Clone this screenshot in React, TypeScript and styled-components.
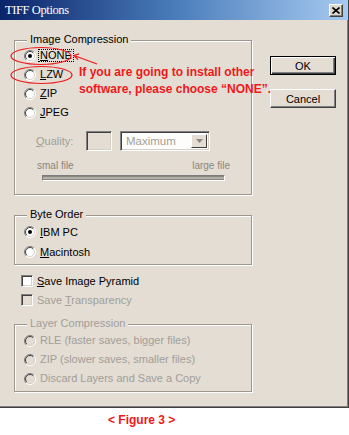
import React from "react";
import styled, { createGlobalStyle, css } from "styled-components";

const BG = "#e3ddd4";
const DIS = "#a29e98";
const RED = "#f0181a";

const GlobalStyle = createGlobalStyle`
  html, body { margin: 0; padding: 0; background: #fff; }
  body { font-family: "Liberation Sans", Arial, sans-serif; font-size: 11px; color: #000; }
  * { box-sizing: border-box; }
`;

const Page = styled.div`
  width: 349px;
  height: 435px;
  display: flex;
  flex-direction: column;
  background: #fff;
  overflow: hidden;
`;

const Window = styled.div`
  position: relative;
  width: 349px;
  height: 408px;
  flex: none;
  background: ${BG};
  border-right: 1px solid #404040;
  border-bottom: 1px solid #404040;
  box-shadow: inset -1px -1px 0 #808080;
  display: flex;
  flex-direction: column;
`;

const TitleBar = styled.div`
  height: 20px;
  flex: none;
  display: flex;
  align-items: center;
  justify-content: space-between;
  padding: 0 5px;
  background: linear-gradient(to right, #0a246a 0%, #4a7cba 50%, #a6caf0 100%);
  color: #fff;
  font-family: "Liberation Serif", "Times New Roman", serif;
  font-size: 12.5px;
  letter-spacing: -0.4px;
`;

const CloseButton = styled.div`
  width: 14px;
  height: 13px;
  display: flex;
  align-items: center;
  justify-content: center;
  background: #dcd7cf;
  border: 1px solid;
  border-color: #fff #404040 #404040 #fff;
  box-shadow: inset -1px -1px 0 #808080;
`;

const Body = styled.div`
  display: flex;
  padding: 20px 0 0 14px;
`;

const LeftCol = styled.div`
  width: 238px;
  display: flex;
  flex-direction: column;
`;

const RightCol = styled.div`
  margin-left: 18px;
  padding-top: 16px;
  display: flex;
  flex-direction: column;
  gap: 14px;
`;

const GroupBox = styled.div<{ $height: number; $top: number; $mt?: number }>`
  position: relative;
  height: ${(p) => p.$height}px;
  margin-top: ${(p) => p.$mt ?? 0}px;
  padding: ${(p) => p.$top}px 0 0 9px;
  border: 1px solid #9b978f;
  box-shadow: inset 1px 1px 0 #fff, 1px 1px 0 #fff;
`;

const Legend = styled.span<{ $disabled?: boolean }>`
  position: absolute;
  top: -8px;
  left: 12px;
  padding: 0 3px;
  line-height: 13px;
  background: ${BG};
  color: ${(p) => (p.$disabled ? DIS : "#000")};
`;

const OptionRow = styled.div<{ $h: number; $disabled?: boolean }>`
  display: flex;
  align-items: center;
  height: ${(p) => p.$h}px;
  gap: 4px;
  line-height: 13px;
  color: ${(p) => (p.$disabled ? DIS : "#000")};
`;

const FocusLabel = styled.span`
  border: 1px dotted #000;
  padding: 0 1px;
  margin-left: -2px;
  line-height: 11px;
`;

const QualityRow = styled.div`
  display: flex;
  align-items: center;
  height: 20px;
  margin-top: 9px;
  margin-left: 12px;
  color: ${DIS};
`;

const QualityLabel = styled.span`
  width: 50px;
`;

const Sunken = css`
  border: 1px solid;
  border-color: #808080 #fff #fff #808080;
  box-shadow: inset 1px 1px 0 #404040, inset -1px -1px 0 #d4d0c8;
`;

const TextField = styled.div`
  ${Sunken};
  width: 26px;
  height: 20px;
  background: ${BG};
`;

const SelectBox = styled.div`
  ${Sunken};
  width: 90px;
  height: 20px;
  margin-left: 8px;
  background: #fdfdfc;
  display: flex;
  align-items: center;
  justify-content: space-between;
  padding: 2px 2px 2px 5px;
  color: ${DIS};
  font-size: 11.5px;
`;

const DropButton = styled.div`
  width: 16px;
  height: 100%;
  background: ${BG};
  border: 1px solid;
  border-color: #fff #404040 #404040 #fff;
  display: flex;
  align-items: center;
  justify-content: center;
`;

const SizeLabels = styled.div`
  display: flex;
  justify-content: space-between;
  height: 12px;
  line-height: 12px;
  margin: 9px 21px 0 13px;
  font-size: 10px;
  color: #8a8681;
`;

const SliderTrack = styled.div`
  width: 183px;
  height: 6px;
  margin: 3px 0 0 18px;
  border: 1px solid;
  border-color: #7c7c7c #fff #fff #7c7c7c;
  background: #b3afa9;
  box-shadow: inset 0 1px 0 #8a8783, inset 0 -1px 0 #8a8783;
`;

const CheckRow = styled.div<{ $disabled?: boolean }>`
  display: flex;
  align-items: center;
  height: 19px;
  gap: 4px;
  padding-left: 7px;
  color: ${(p) => (p.$disabled ? DIS : "#000")};
`;

const CheckBox = styled.span<{ $disabled?: boolean }>`
  width: 12px;
  height: 12px;
  flex: none;
  ${Sunken};
  background: ${(p) => (p.$disabled ? BG : "#fff")};
`;

const Button = styled.button<{ $default?: boolean }>`
  width: 66px;
  height: 19px;
  padding: 0;
  font: 11px "Liberation Sans", Arial, sans-serif;
  color: #000;
  background: ${BG};
  ${(p) =>
    p.$default
      ? css`
          border: 1px solid #000;
          box-shadow: inset 1px 1px 0 #fff, inset -1px -1px 0 #404040,
            inset -2px -2px 0 #808080;
        `
      : css`
          border: 1px solid;
          border-color: #fff #404040 #404040 #fff;
          box-shadow: inset -1px -1px 0 #808080;
        `}
`;

const Annotation = styled.div`
  position: absolute;
  left: 79px;
  top: 64px;
  font: bold 12px/17px "Liberation Sans", Arial, sans-serif;
  color: ${RED};
  white-space: nowrap;
`;

const Overlay = styled.svg`
  position: absolute;
  left: 0;
  top: 0;
  pointer-events: none;
`;

const Caption = styled.div`
  margin-top: 5px;
  padding-left: 108px;
  font: bold 12px/14px "Liberation Sans", Arial, sans-serif;
  color: ${RED};
`;

function Radio({ checked, disabled }: { checked?: boolean; disabled?: boolean }) {
  return (
    <svg width="12" height="12" viewBox="0 0 12 12" style={{ flex: "none" }}>
      <circle cx="6" cy="6" r="5.5" fill={disabled ? BG : "#fff"} />
      <path d="M2.1 9.9 A5.5 5.5 0 0 1 9.9 2.1" stroke="#808080" fill="none" />
      <path d="M9.9 2.1 A5.5 5.5 0 0 1 2.1 9.9" stroke="#fff" fill="none" />
      <path d="M2.8 9.2 A4.5 4.5 0 0 1 9.2 2.8" stroke="#404040" fill="none" />
      <path d="M9.2 2.8 A4.5 4.5 0 0 1 2.8 9.2" stroke="#d4d0c8" fill="none" />
      {checked && <circle cx="6" cy="6" r="2" fill={disabled ? "#808080" : "#000"} />}
    </svg>
  );
}

export default function App() {
  return (
    <>
      <GlobalStyle />
      <Page>
        <Window>
          <TitleBar>
            <span>TIFF Options</span>
            <CloseButton>
              <svg width="8" height="7" viewBox="0 0 8 7">
                <path d="M0.5 0.5 L7.5 6.5 M7.5 0.5 L0.5 6.5" stroke="#000" strokeWidth="1.6" />
              </svg>
            </CloseButton>
          </TitleBar>
          <Body>
            <LeftCol>
              <GroupBox $height={155} $top={5}>
                <Legend>Image Compression</Legend>
                <OptionRow $h={19}>
                  <Radio checked />
                  <FocusLabel>
                    <u>N</u>ONE
                  </FocusLabel>
                </OptionRow>
                <OptionRow $h={19}>
                  <Radio />
                  <span>
                    <u>L</u>ZW
                  </span>
                </OptionRow>
                <OptionRow $h={19}>
                  <Radio />
                  <span>
                    <u>Z</u>IP
                  </span>
                </OptionRow>
                <OptionRow $h={19}>
                  <Radio />
                  <span>
                    <u>J</u>PEG
                  </span>
                </OptionRow>
                <QualityRow>
                  <QualityLabel>
                    <u>Q</u>uality:
                  </QualityLabel>
                  <TextField />
                  <SelectBox>
                    <span>Maximum</span>
                    <DropButton>
                      <svg width="7" height="4" viewBox="0 0 7 4">
                        <path d="M0 0 H7 L3.5 4 Z" fill="#8a8782" />
                      </svg>
                    </DropButton>
                  </SelectBox>
                </QualityRow>
                <SizeLabels>
                  <span>smal file</span>
                  <span>large file</span>
                </SizeLabels>
                <SliderTrack />
              </GroupBox>

              <GroupBox $height={50} $top={6} $mt={20}>
                <Legend>Byte Order</Legend>
                <OptionRow $h={20}>
                  <Radio checked />
                  <span>
                    <u>I</u>BM PC
                  </span>
                </OptionRow>
                <OptionRow $h={20}>
                  <Radio />
                  <span>
                    <u>M</u>acintosh
                  </span>
                </OptionRow>
              </GroupBox>

              <div style={{ marginTop: 6 }}>
                <CheckRow>
                  <CheckBox />
                  <span>
                    <u>S</u>ave Image Pyramid
                  </span>
                </CheckRow>
                <CheckRow $disabled>
                  <CheckBox $disabled />
                  <span>
                    Save <u>T</u>ransparency
                  </span>
                </CheckRow>
              </div>

              <GroupBox $height={68} $top={6} $mt={15}>
                <Legend $disabled>Layer Compression</Legend>
                <OptionRow $h={19} $disabled>
                  <Radio disabled />
                  <span>RLE (faster saves, bigger files)</span>
                </OptionRow>
                <OptionRow $h={19} $disabled>
                  <Radio disabled />
                  <span>ZIP (slower saves, smaller files)</span>
                </OptionRow>
                <OptionRow $h={19} $disabled>
                  <Radio disabled />
                  <span>Discard Layers and Save a Copy</span>
                </OptionRow>
              </GroupBox>
            </LeftCol>
            <RightCol>
              <Button $default>OK</Button>
              <Button>Cancel</Button>
            </RightCol>
          </Body>

          <Overlay width="349" height="408" viewBox="0 0 349 408">
            <ellipse cx="41" cy="56" rx="30" ry="8.5" fill="none" stroke={RED} strokeWidth="1.2" />
            <ellipse cx="41.5" cy="75" rx="30.5" ry="8.5" fill="none" stroke={RED} strokeWidth="1.2" />
            <path d="M97 64 L74 55.5" stroke={RED} strokeWidth="1.3" fill="none" />
            <path d="M79 53.8 L74 55.5 L78 59.6" stroke={RED} strokeWidth="1.3" fill="none" />
          </Overlay>
          <Annotation>
            If you are going to install other
            <br />
            software, please choose “NONE”.
          </Annotation>
        </Window>
        <Caption>&lt; Figure 3 &gt;</Caption>
      </Page>
    </>
  );
}
